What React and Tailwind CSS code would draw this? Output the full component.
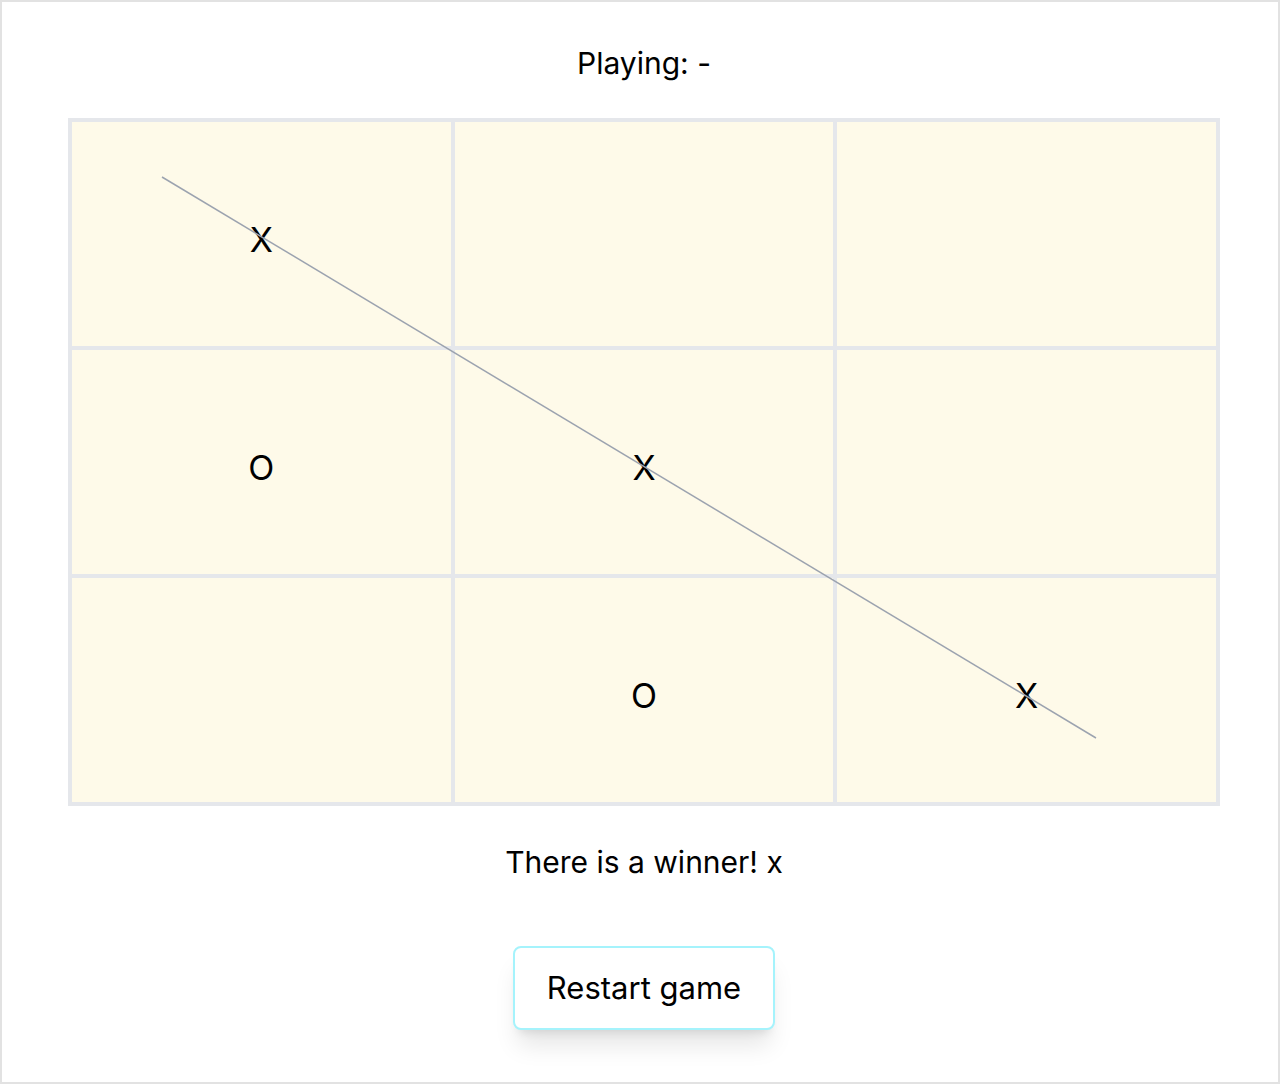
import React from 'react';

const board = ['X', '', '', 'O', 'X', '', '', 'O', 'X'];

export default function App() {
  return (
    <div className="h-[1084px] w-[1280px] border-2 border-[#e2e2e2] bg-white pl-[8px] flex flex-col items-center font-['Inter','Noto_Sans',sans-serif] text-black">
      <div className="mt-[43px] h-[36px] text-[30px] leading-[36px]">Playing: -</div>

      <div className="relative mt-[37px] w-[1152px] border-2 border-[#e5e7eb]">
        <div className="grid grid-cols-3">
          {board.map((v, i) => (
            <div
              key={i}
              className="h-[228px] border-2 border-[#e5e7eb] bg-[#fefae9] flex items-center justify-center text-[34px] pt-[10px]"
            >
              {v}
            </div>
          ))}
        </div>
        <svg className="absolute left-0 top-0 pointer-events-none" width="1152" height="688">
          <line x1="92" y1="57" x2="1026" y2="618" stroke="#9ca3af" strokeWidth="1.5" />
        </svg>
      </div>

      <div className="mt-[38px] h-[36px] text-[30px] leading-[36px]">There is a winner! x</div>

      <button className="mt-[66px] w-[262px] h-[84px] rounded-lg border-2 border-[#a5f3fc] bg-white text-[31px] shadow-xl shadow-black/10">
        Restart game
      </button>
    </div>
  );
}
